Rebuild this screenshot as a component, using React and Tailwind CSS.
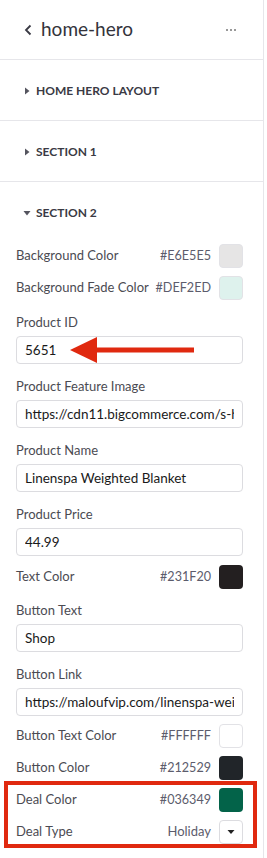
const SECTIONS = ['HOME HERO LAYOUT', 'SECTION 1']

function Caret({ open }) {
  return (
    <svg width="8" height="8" viewBox="0 0 8 8" className="shrink-0">
      {open ? <path d="M0.5 2 L7.5 2 L4 6.5 Z" fill="#55555f" /> : <path d="M2 0.5 L6.5 4 L2 7.5 Z" fill="#55555f" />}
    </svg>
  )
}

function ColorRow({ label, hex, swatch, border }) {
  return (
    <div className="flex items-center h-6 whitespace-nowrap">
      <span className="flex-1 text-[#4b4b52]">{label}</span>
      <span className="text-[#5c5c6c] text-[12.6px] mr-2">{hex}</span>
      <span className={`w-6 h-6 rounded-[4px] ${swatch} ${border ? 'border border-[#e2e2e6]' : ''}`} />
    </div>
  )
}

function Field({ label, value, children }) {
  return (
    <div className="relative">
      <div className="leading-5 mb-1 text-[#4b4b52]">{label}</div>
      <input readOnly value={value} className="w-full h-7 border border-[#dcdce0] rounded-[4px] px-2 text-[13.5px] text-[#1a1a1a] outline-none bg-white" />
      {children}
    </div>
  )
}

export default function App() {
  return (
    <div className="w-[267px] min-h-[858px] bg-white text-[13px]" style={{ fontFamily: '"Source Sans Pro", Lato, "Noto Sans", sans-serif' }}>
      <div className="w-[264px] min-h-[858px] border-r border-[#e6e6ea] pb-3">
        <div className="h-[60px] flex items-center pl-[24px] pr-[27px] border-b border-[#e6e6ea]">
          <svg width="9" height="12" viewBox="0 0 9 12" className="mr-[8px]">
            <path d="M6.5 1.5 L2 6 L6.5 10.5" stroke="#3a3a44" strokeWidth="1.8" fill="none" />
          </svg>
          <span className="flex-1 text-[19px] text-[#33333b]">home-hero</span>
          <span className="flex gap-[2px]">
            <span className="w-[2px] h-[2px] rounded-full bg-[#777]" />
            <span className="w-[2px] h-[2px] rounded-full bg-[#777]" />
            <span className="w-[2px] h-[2px] rounded-full bg-[#777]" />
          </span>
        </div>
        {SECTIONS.map(s => (
          <div key={s} className="h-[61px] flex items-center gap-[5px] pl-[23px] pt-[2px] border-b border-[#e6e6ea]">
            <Caret />
            <span className="font-bold text-[12px] text-[#3a3a44]">{s}</span>
          </div>
        ))}
        <div className="h-[60px] flex items-center gap-[5px] pl-[23px] pt-[2px]">
          <Caret open />
          <span className="font-bold text-[12px] text-[#3a3a44]">SECTION 2</span>
        </div>
        <div className="pl-4 pr-5 pt-[2px] flex flex-col">
          <ColorRow label="Background Color" hex="#E6E5E5" swatch="bg-[#e6e5e5]" border />
          <div className="mt-2"><ColorRow label="Background Fade Color" hex="#DEF2ED" swatch="bg-[#def2ed]" border /></div>
          <div className="mt-3">
            <Field label="Product ID" value="5651">
              <svg width="130" height="28" viewBox="0 0 130 28" className="absolute left-[53px] top-[24px]">
                <path d="M1 14 L28 1 L28 27 Z" fill="#e0290f" />
                <rect x="27" y="11.5" width="98" height="5" fill="#e0290f" />
              </svg>
            </Field>
          </div>
          <div className="mt-3"><Field label="Product Feature Image" value="https://cdn11.bigcommerce.com/s-hmhnh4h9/images/stencil" /></div>
          <div className="mt-3"><Field label="Product Name" value="Linenspa Weighted Blanket" /></div>
          <div className="mt-3"><Field label="Product Price" value="44.99" /></div>
          <div className="mt-[9px]"><ColorRow label="Text Color" hex="#231F20" swatch="bg-[#231f20]" /></div>
          <div className="mt-[11px]"><Field label="Button Text" value="Shop" /></div>
          <div className="mt-3"><Field label="Button Link" value="https://maloufvip.com/linenspa-weighted-blanket" /></div>
          <div className="mt-2"><ColorRow label="Button Text Color" hex="#FFFFFF" swatch="bg-white" border /></div>
          <div className="mt-2"><ColorRow label="Button Color" hex="#212529" swatch="bg-[#212529]" /></div>
          <div className="-ml-3 -mr-[14px] mt-px border-4 border-[#e0290f] pl-2 pr-[10px] pt-[3px] pb-0 flex flex-col gap-2">
            <ColorRow label="Deal Color" hex="#036349" swatch="bg-[#036349]" />
            <div className="flex items-center h-6">
              <span className="flex-1 text-[#4b4b52]">Deal Type</span>
              <span className="text-[#5c5c6c] mr-2">Holiday</span>
              <span className="w-6 h-6 rounded-[4px] border border-[#dcdce0] flex items-center justify-center">
                <svg width="8" height="6" viewBox="0 0 8 6"><path d="M0.5 1 L7.5 1 L4 5 Z" fill="#222" /></svg>
              </span>
            </div>
          </div>
        </div>
      </div>
    </div>
  )
}
